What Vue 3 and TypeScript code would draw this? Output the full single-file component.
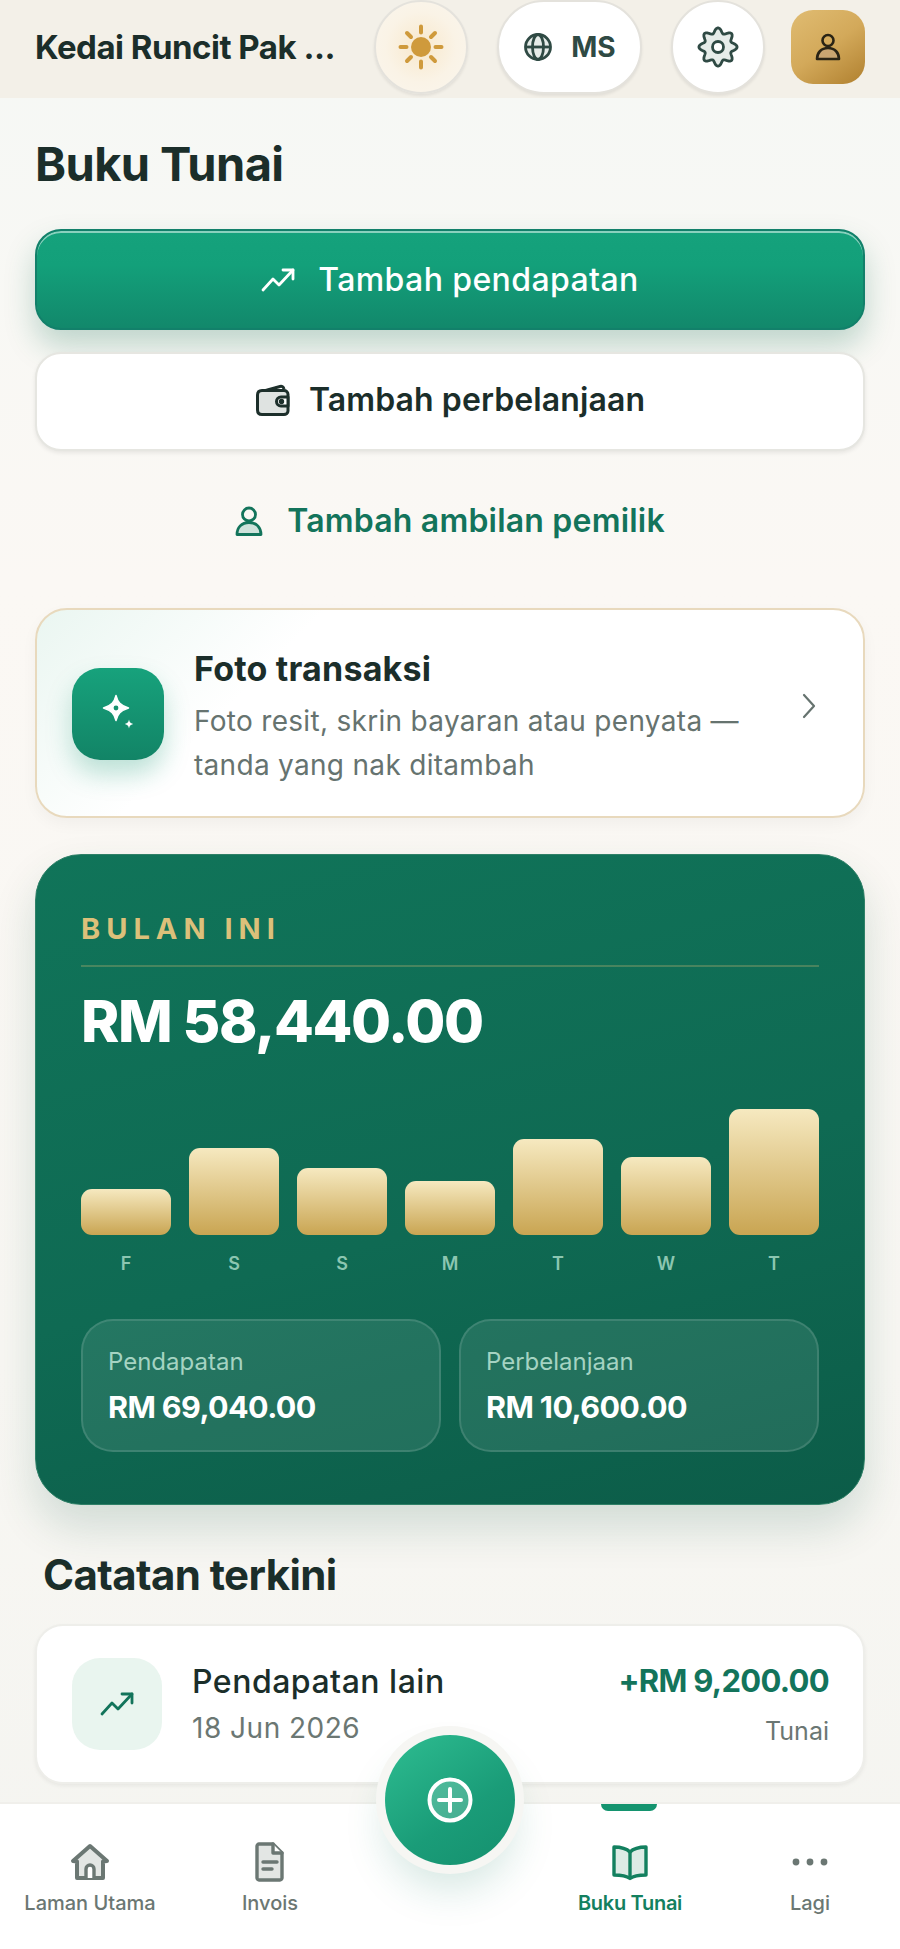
<template>
  <div class="app">
    <header class="topbar">
      <div class="shop-name">Kedai Runcit Pak ...</div>
      <button class="round-btn sun-btn" aria-label="Tema">
        <svg width="46" height="46" viewBox="0 0 46 46" fill="none" stroke="#cf9a3c" stroke-width="4" stroke-linecap="round">
          <circle cx="23" cy="23" r="10" fill="#cf9a3c" stroke="none" />
          <path d="M23 2.500v6M23 37.500v6M2.500 23h6M37.500 23h6M9 9l4 4M33 33l4 4M9 37l4-4M33 13l4-4" />
        </svg>
      </button>
      <button class="lang-btn" aria-label="Bahasa">
        <svg width="30" height="30" viewBox="0 0 30 30" fill="none" stroke="#2f4a44" stroke-width="2.800">
          <circle cx="15" cy="15" r="12.500" fill="#e6ece9" />
          <ellipse cx="15" cy="15" rx="5.500" ry="12.500" />
          <path d="M2.500 15h25" />
        </svg>
        <span>MS</span>
      </button>
      <button class="round-btn" aria-label="Tetapan">
        <svg width="42" height="42" viewBox="0 0 42 42" fill="#e6ece9" stroke="#2f4a44" stroke-width="2.800" stroke-linejoin="round">
          <path :d="gearPath" />
          <circle cx="21" cy="21" r="5.500" fill="#fff" />
        </svg>
      </button>
      <button class="avatar" aria-label="Profil">
        <svg width="30" height="30" viewBox="0 0 30 30" fill="none" stroke="#2a2415" stroke-width="2.600" stroke-linejoin="round">
          <circle cx="15" cy="8.500" r="5.500" />
          <path d="M4 27c0-6 4-11 11-11s11 5 11 11z" fill="#c9a571" />
        </svg>
      </button>
    </header>

    <main class="content">
      <h1 class="page-title">Buku Tunai</h1>

      <button class="action action-primary">
        <svg width="34" height="26" viewBox="0 0 34 26" fill="none" stroke="#fff" stroke-width="2.800" stroke-linecap="round" stroke-linejoin="round">
          <path d="M2 23l10-11 6 6L32 3" />
          <path d="M22 3h10v9" />
        </svg>
        Tambah pendapatan
      </button>

      <button class="action action-secondary">
        <svg width="36" height="32" viewBox="0 0 36 32" fill="none" stroke="#1d2f2b" stroke-width="3" stroke-linejoin="round">
          <path d="M7 7.500 25 2.500c2-.5 3.500.5 4 2.500" />
          <path d="M2.500 11c0-3 2-4.500 4.500-4.500h22c2 0 4 1.500 4 4V27c0 2-2 3.500-4 3.500H7c-2.500 0-4.500-1.500-4.500-4.500z" fill="#dfe3e1" />
          <path d="M33 13h-7a4 4 0 0 0 0 9h7z" fill="#fff" />
          <circle cx="26.500" cy="17.500" r="1.200" fill="#1d2f2b" />
        </svg>
        Tambah perbelanjaan
      </button>

      <button class="action action-link">
        <svg width="28" height="30" viewBox="0 0 28 30" fill="none" stroke="#13745b" stroke-width="2.800" stroke-linejoin="round">
          <circle cx="14" cy="8.500" r="6.500" />
          <path d="M2 28.500c0-7 4.500-12 12-12s12 5 12 12z" fill="#cfe2db" />
        </svg>
        Tambah ambilan pemilik
      </button>

      <section class="photo-card">
        <div class="photo-icon">
          <svg width="44" height="44" viewBox="0 0 44 44" fill="#fff">
            <path d="M20 3.500C21.500 10 24.500 13.500 32.500 16 24.500 18.500 21.500 22 20 28.500 18.500 22 15.500 18.500 7.500 16 15.500 13.500 18.500 10 20 3.500z" stroke="#fff" stroke-width="1.500" stroke-linejoin="round" />
            <circle cx="20" cy="16" r="2.400" fill="#17926f" />
            <path d="M33 27.500c.5 2.600 1.400 3.600 4.200 4.500-2.800.9-3.700 1.900-4.200 4.500-.5-2.600-1.400-3.600-4.200-4.500 2.800-.9 3.700-1.900 4.200-4.500z" />
          </svg>
        </div>
        <div class="photo-text">
          <div class="photo-title">Foto transaksi</div>
          <div class="photo-desc">Foto resit, skrin bayaran atau penyata — tanda yang nak ditambah</div>
        </div>
        <svg class="chevron" width="14" height="26" viewBox="0 0 14 26" fill="none" stroke="#66736f" stroke-width="2.200" stroke-linecap="round" stroke-linejoin="round">
          <path d="M2 2l10 11L2 24" />
        </svg>
      </section>

      <section class="month-card">
        <div class="month-label">BULAN INI</div>
        <div class="month-total">RM 58,440.00</div>
        <div class="chart">
          <div v-for="(bar, i) in bars" :key="i" class="chart-col">
            <div class="chart-slot">
              <div class="chart-bar" :style="{ height: bar.height + 'px' }"></div>
            </div>
            <div class="chart-day">{{ bar.day }}</div>
          </div>
        </div>
        <div class="stats">
          <div v-for="stat in stats" :key="stat.label" class="stat">
            <div class="stat-label">{{ stat.label }}</div>
            <div class="stat-value">{{ stat.value }}</div>
          </div>
        </div>
      </section>

      <h2 class="section-title">Catatan terkini</h2>

      <section class="entry">
        <div class="entry-icon">
          <svg width="34" height="26" viewBox="0 0 34 26" fill="none" stroke="#13745b" stroke-width="2.800" stroke-linecap="round" stroke-linejoin="round">
            <path d="M2 23l10-11 6 6L32 3" />
            <path d="M22 3h10v9" />
          </svg>
        </div>
        <div class="entry-main">
          <div class="entry-title">Pendapatan lain</div>
          <div class="entry-date">18 Jun 2026</div>
        </div>
        <div class="entry-side">
          <div class="entry-amount">+RM 9,200.00</div>
          <div class="entry-method">Tunai</div>
        </div>
      </section>
    </main>

    <nav class="tabbar">
      <div class="tab">
        <svg width="40" height="40" viewBox="0 0 40 40" fill="#e3e6e4" stroke="#6b7773" stroke-width="4" stroke-linejoin="round">
          <path d="M20 4 3 19l4 .5V36h26V19.500l4-.5z" />
          <path d="M16 36V27a4 4 0 0 1 8 0v9" fill="#fff" stroke-width="3.400" />
        </svg>
        <span>Laman Utama</span>
      </div>
      <div class="tab">
        <svg width="40" height="40" viewBox="0 0 40 40" fill="#e3e6e4" stroke="#6b7773" stroke-width="3.400" stroke-linejoin="round" stroke-linecap="round">
          <path d="M9 2h14l9 9v25c0 1-1 2-2 2H9c-1 0-2-1-2-2V4c0-1 1-2 2-2z" />
          <path d="M23 2v9h9" fill="#fff" />
          <path d="M13 20h14M13 27h9" />
        </svg>
        <span>Invois</span>
      </div>
      <div class="tab tab-spacer"></div>
      <div class="tab tab-active">
        <span class="tab-marker"></span>
        <svg width="40" height="40" viewBox="0 0 40 40" fill="#dcebe5" stroke="#13805f" stroke-width="3.400" stroke-linejoin="round">
          <path d="M20 10C16.500 6.500 10 5 4 5v28c6 0 12 .5 16 3.500 4-3 10-3.500 16-3.500V5c-6 0-12.500 1.500-16 5z" />
          <path d="M20 10v26.500" />
        </svg>
        <span>Buku Tunai</span>
      </div>
      <div class="tab">
        <svg width="40" height="40" viewBox="0 0 40 40" fill="#6b7773">
          <circle cx="6" cy="20" r="3.400" />
          <circle cx="20" cy="20" r="3.400" />
          <circle cx="34" cy="20" r="3.400" />
        </svg>
        <span>Lagi</span>
      </div>
    </nav>

    <button class="fab" aria-label="Tambah">
      <svg width="46" height="46" viewBox="0 0 46 46" fill="rgba(255,255,255,0.2)" stroke="#fff" stroke-width="4" stroke-linecap="round">
        <circle cx="23" cy="23" r="20.500" />
        <path d="M23 12v22M12 23h22" />
      </svg>
    </button>
  </div>
</template>

<script setup lang="ts">
interface Bar {
  day: string
  height: number
}

const bars: Bar[] = [
  { day: 'F', height: 46 },
  { day: 'S', height: 87 },
  { day: 'S', height: 67 },
  { day: 'M', height: 54 },
  { day: 'T', height: 96 },
  { day: 'W', height: 78 },
  { day: 'T', height: 126 }
]

const stats = [
  { label: 'Pendapatan', value: 'RM 69,040.00' },
  { label: 'Perbelanjaan', value: 'RM 10,600.00' }
]

// eight soft lobes round a circle
const gearPoints: string[] = []
for (let i = 0; i < 96; i++) {
  const angle = (i / 96) * Math.PI * 2
  const radius = 16.5 + 2.6 * Math.cos(angle * 8)
  gearPoints.push(`${(21 + radius * Math.sin(angle)).toFixed(2)} ${(21 - radius * Math.cos(angle)).toFixed(2)}`)
}
const gearPath = `M${gearPoints.join('L')}Z`
</script>

<style>
html,
body {
  margin: 0;
  background: #f9f8f4;
}
</style>

<style scoped>
.app {
  position: relative;
  width: 900px;
  height: 1949px;
  display: flex;
  flex-direction: column;
  overflow: hidden;
  font-family: Inter, "Noto Sans", sans-serif;
  color: #1b2e2a;
  background: linear-gradient(180deg, #f5f8f5 0%, #fbf8f4 30%, #f8f7f3 70%, #f4f4f0 100%);
}

button {
  font-family: inherit;
  cursor: pointer;
}

.topbar {
  flex: none;
  height: 98px;
  box-sizing: border-box;
  padding: 0 35px 4px;
  display: flex;
  align-items: center;
  background: #f3f0e8;
}

.shop-name {
  flex: 1;
  font-size: 33px;
  font-weight: 700;
  letter-spacing: -0.5px;
  white-space: nowrap;
}

.round-btn {
  width: 94px;
  height: 94px;
  padding: 0;
  display: flex;
  align-items: center;
  justify-content: center;
  background: #fff;
  border: 2px solid #e4e2dc;
  border-radius: 50%;
  box-shadow: 0 2px 3px rgba(0, 0, 0, 0.07);
}

.sun-btn {
  background: radial-gradient(circle, #f8e8cc 0%, #faf3e6 55%, #faf6ee 100%);
}

.lang-btn {
  width: 145px;
  height: 94px;
  margin: 0 29px;
  padding: 0;
  display: flex;
  align-items: center;
  justify-content: center;
  gap: 18px;
  background: #fff;
  border: 2px solid #e4e2dc;
  border-radius: 47px;
  box-shadow: 0 2px 3px rgba(0, 0, 0, 0.07);
  color: #2f4a44;
  font-size: 28px;
  font-weight: 700;
}

.avatar {
  width: 74px;
  height: 74px;
  margin-left: 26px;
  padding: 0;
  display: flex;
  align-items: center;
  justify-content: center;
  border: none;
  border-radius: 22px;
  background: linear-gradient(145deg, #e0bc72 0%, #d3a95a 50%, #b0802f 100%);
}

.content {
  flex: 1;
  min-height: 0;
  overflow: hidden;
  padding: 0 35px;
  display: flex;
  flex-direction: column;
}

.page-title {
  margin: 41px 0 40px;
  font-size: 47px;
  line-height: 50px;
  font-weight: 700;
  letter-spacing: -0.6px;
}

.action {
  flex: none;
  width: 100%;
  display: flex;
  align-items: center;
  justify-content: center;
  gap: 18px;
  padding: 0;
  font-size: 32px;
  font-weight: 600;
  box-sizing: border-box;
}

.action-primary {
  height: 101px;
  gap: 23px;
  color: #fff;
  border: 2px solid #12806a;
  border-radius: 26px;
  background: linear-gradient(180deg, #15a27c 0%, #13a07a 35%, #12886b 100%);
  box-shadow: inset 0 2px 0 rgba(255, 255, 255, 0.5), 0 16px 30px rgba(18, 110, 85, 0.25);
  font-weight: 500;
  letter-spacing: 0.4px;
}

.action-secondary {
  height: 99px;
  margin-top: 22px;
  padding-bottom: 4px;
  color: #1b2e2a;
  background: #fff;
  border: 2px solid #e6e6e1;
  border-radius: 26px;
  box-shadow: 0 2px 4px rgba(0, 0, 0, 0.08);
  letter-spacing: 0.1px;
}

.action-link {
  height: 69px;
  margin-top: 35px;
  gap: 24px;
  background: none;
  border: none;
  color: #13745b;
  letter-spacing: 0.2px;
}

.photo-card {
  flex: none;
  margin-top: 53px;
  height: 210px;
  box-sizing: border-box;
  padding: 0 35px;
  display: flex;
  align-items: center;
  background: linear-gradient(135deg, #eaf6f1 0%, #fff 28%);
  border: 2px solid #e8d9bd;
  border-radius: 32px;
  box-shadow: 0 6px 16px rgba(0, 0, 0, 0.04);
}

.photo-icon {
  flex: none;
  width: 92px;
  height: 92px;
  margin-top: 2px;
  display: flex;
  align-items: center;
  justify-content: center;
  border-radius: 28px;
  background: linear-gradient(180deg, #17a27c 0%, #128466 100%);
  box-shadow: 0 14px 26px rgba(20, 150, 115, 0.28);
}

.photo-text {
  flex: 1;
  margin-left: 30px;
  padding: 7px 40px 0 0;
}

.photo-title {
  font-size: 34px;
  line-height: 44px;
  font-weight: 700;
  letter-spacing: 0.2px;
}

.photo-desc {
  margin-top: 8px;
  font-size: 28px;
  line-height: 44px;
  letter-spacing: 0.3px;
  color: #66736f;
}

.chevron {
  flex: none;
  margin: -14px 12px 0 -8px;
}

.month-card {
  flex: none;
  margin-top: 36px;
  height: 651px;
  box-sizing: border-box;
  padding: 52px 45px 0;
  border: 1px solid #2f8067;
  border-radius: 46px;
  background: linear-gradient(165deg, #107459 0%, #0f6a53 55%, #0c5c48 100%);
  box-shadow: 0 22px 44px rgba(12, 80, 62, 0.16);
}

.month-label {
  padding-bottom: 14px;
  border-bottom: 2px solid rgba(222, 192, 120, 0.28);
  font-size: 29px;
  line-height: 44px;
  font-weight: 700;
  letter-spacing: 6px;
  color: #dcc07a;
}

.month-total {
  margin-top: 21px;
  font-size: 58px;
  line-height: 66px;
  font-weight: 800;
  letter-spacing: -1.400px;
  color: #fff;
}

.chart {
  margin-top: 51px;
  display: grid;
  grid-template-columns: repeat(7, 1fr);
  gap: 18px;
}

.chart-slot {
  height: 130px;
  display: flex;
  align-items: flex-end;
}

.chart-bar {
  width: 100%;
  border-radius: 11px;
  background: linear-gradient(180deg, #f6e9c0 0%, #c9a552 100%);
}

.chart-day {
  margin-top: 18px;
  text-align: center;
  font-size: 18px;
  line-height: 22px;
  font-weight: 600;
  color: #8cc6b1;
}

.stats {
  margin-top: 44px;
  display: grid;
  grid-template-columns: 1fr 1fr;
  gap: 18px;
}

.stat {
  height: 133px;
  box-sizing: border-box;
  padding: 24px 25px 0;
  border: 2px solid rgba(255, 255, 255, 0.12);
  border-radius: 32px;
  background: rgba(255, 255, 255, 0.09);
}

.stat-label {
  font-size: 24px;
  line-height: 34px;
  color: #a5d3c2;
}

.stat-value {
  margin-top: 6px;
  font-size: 30.500px;
  line-height: 44px;
  font-weight: 700;
  letter-spacing: -0.600px;
  color: #fff;
}

.section-title {
  margin: 47px 0 26px 8px;
  font-size: 42px;
  line-height: 46px;
  font-weight: 700;
  letter-spacing: -0.6px;
}

.entry {
  flex: none;
  height: 160px;
  box-sizing: border-box;
  padding: 0 34px 0 35px;
  display: flex;
  align-items: center;
  background: #fff;
  border: 2px solid #eeeeea;
  border-radius: 28px;
  box-shadow: 0 2px 4px rgba(0, 0, 0, 0.06);
}

.entry-icon {
  flex: none;
  width: 90px;
  height: 92px;
  display: flex;
  align-items: center;
  justify-content: center;
  border-radius: 28px;
  background: #e9f5ef;
}

.entry-main {
  flex: 1;
  margin-left: 30px;
}

.entry-title {
  font-size: 32px;
  line-height: 44px;
  font-weight: 500;
  letter-spacing: 0.5px;
}

.entry-date {
  margin-top: 4px;
  font-size: 28px;
  line-height: 40px;
  letter-spacing: 0.5px;
  color: #6b7773;
}

.entry-side {
  text-align: right;
}

.entry-amount {
  font-size: 31px;
  line-height: 44px;
  font-weight: 700;
  letter-spacing: -0.700px;
  color: #13745b;
}

.entry-method {
  margin-top: 10px;
  font-size: 25px;
  line-height: 36px;
  color: #6b7773;
}

.tabbar {
  position: relative;
  flex: none;
  height: 147px;
  display: grid;
  grid-template-columns: repeat(5, 1fr);
  background: #fff;
  border-top: 2px solid #f0efeb;
  box-sizing: border-box;
}

.tab {
  position: relative;
  padding-top: 38px;
  display: flex;
  flex-direction: column;
  align-items: center;
  gap: 7px;
  font-size: 20px;
  line-height: 28px;
  font-weight: 500;
  color: #6b7773;
}

.tab-active {
  color: #13805f;
  font-weight: 600;
  letter-spacing: -0.300px;
}

.tab-marker {
  position: absolute;
  top: 0;
  left: 61px;
  width: 56px;
  height: 7px;
  border-radius: 0 0 8px 8px;
  background: #14946f;
}

.fab {
  position: absolute;
  left: 385px;
  top: 1735px;
  width: 130px;
  height: 130px;
  padding: 0;
  display: flex;
  align-items: center;
  justify-content: center;
  border: none;
  border-radius: 50%;
  background: linear-gradient(145deg, #2ebd91 0%, #1a9c78 60%, #15906e 100%);
  box-shadow: 0 0 0 9px #f6f6f3, 0 24px 40px rgba(20, 120, 95, 0.18);
}
</style>
